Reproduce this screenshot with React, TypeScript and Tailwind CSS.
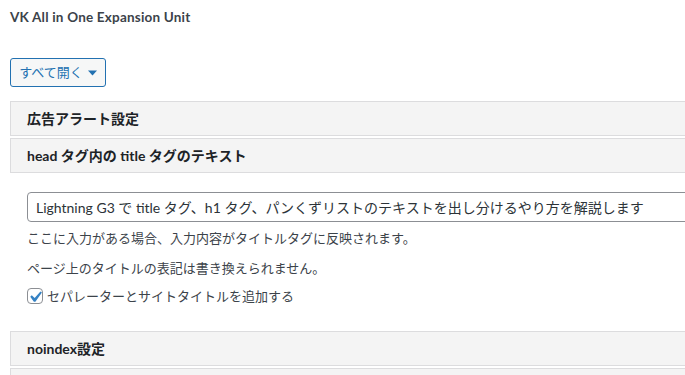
const jp = "font-['Lato','Noto_Sans_CJK_JP',sans-serif]"

function PanelHeader({ title }: { title: string }) {
  return (
    <div className="h-[35px] border border-[#dcdcde] bg-[#f4f4f4] pl-[16px] flex items-center">
      <h3 className="text-[14px] font-bold text-[#1d2327] leading-none">{title}</h3>
    </div>
  )
}

export default function App() {
  return (
    <div className={"w-[685px] h-[375px] overflow-hidden bg-white " + jp}>
      <div className="w-[740px] pl-[10px] pt-[8px]">
        <h1 className="text-[13.5px] font-bold text-[#3c434a] leading-[18px] tracking-[0.2px]">VK All in One Expansion Unit</h1>
        <button className="mt-[32px] h-[29px] w-[96px] rounded-[3px] border border-[#2271b1] bg-[#f6f7f7] text-[#2271b1] text-[13px] flex items-center justify-center gap-[5px]">
          すべて開く
          <svg width="9" height="6" viewBox="0 0 9 6" className="mt-[1px]">
            <path d="M0 0.5h9L4.5 5.5z" fill="#2271b1" />
          </svg>
        </button>
        <div className="mt-[14px] flex flex-col gap-[2px]">
          <PanelHeader title="広告アラート設定" />
          <PanelHeader title="head タグ内の title タグのテキスト" />
        </div>
        <div className="pl-[17px] pt-[19px]">
          <input
            readOnly
            value="Lightning G3 で title タグ、h1 タグ、パンくずリストのテキストを出し分けるやり方を解説します"
            className={"block w-full h-[30px] rounded-[4px] border border-[#8c8f94] px-[8px] text-[14px] text-[#2c3338] outline-none " + jp}
          />
          <p className="mt-[8px] text-[13px] text-[#3c434a] leading-[16px]">ここに入力がある場合、入力内容がタイトルタグに反映されます。</p>
          <p className="mt-[14px] text-[13px] text-[#3c434a] leading-[16px]">ページ上のタイトルの表記は書き換えられません。</p>
          <label className="mt-[12px] flex items-center gap-[4px] text-[13px] text-[#3c434a] leading-[16px]">
            <span className="w-[16px] h-[16px] rounded-[4px] border border-[#8c8f94] bg-white flex items-center justify-center overflow-visible">
              <svg width="18" height="18" viewBox="2 1 16 16" className="shrink-0">
                <path d="M14.83 4.89l1.34.94-5.81 8.38H9.02L5.78 9.67l1.34-1.25 2.57 2.4z" fill="#3582c4" />
              </svg>
            </span>
            セパレーターとサイトタイトルを追加する
          </label>
        </div>
        <div className="mt-[27px] flex flex-col gap-[2px]">
          <PanelHeader title="noindex設定" />
          <PanelHeader title="" />
        </div>
      </div>
    </div>
  )
}
